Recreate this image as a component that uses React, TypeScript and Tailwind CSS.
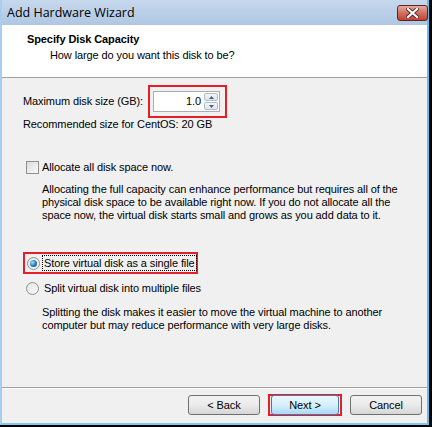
const ui = "font-['Liberation_Sans',Arial,sans-serif] text-[11px] leading-[13px] tracking-[-0.1px] text-black";

function WinButton({ label, active }: { label: string; active?: boolean }) {
  return (
    <button
      className={
        "h-[20px] rounded-[3px] border text-[11px] leading-none " +
        (active
          ? "w-[68px] border-[#3c7fb1] bg-gradient-to-b from-[#eaf6fd] via-[#d9f0fc] to-[#a7d9f5]"
          : "w-[72px] border-[#707070] bg-gradient-to-b from-[#f2f2f2] via-[#ebebeb] to-[#d6d6d6]")
      }
    >
      {label}
    </button>
  );
}

function Radio({ checked }: { checked?: boolean }) {
  return (
    <span className="flex h-[13px] w-[13px] shrink-0 items-center justify-center rounded-full border border-[#8e8f8f] bg-gradient-to-br from-[#e4e4e4] to-[#f9f9f9]">
      {checked && (
        <span className="h-[7px] w-[7px] rounded-full bg-[radial-gradient(circle_at_35%_35%,#9be0fb,#1f6fb2_60%,#0b3f77)]"></span>
      )}
    </span>
  );
}

export default function App() {
  return (
    <div className="h-[427px] w-[432px] bg-black">
      <div className={"flex h-[425px] w-[429px] flex-col border-x-2 border-b-2 border-l-[#a8cdee] border-r-[#59c3ef] border-b-[#7fc9ef] " + ui}>
        {/* Title bar */}
        <div className="relative flex h-[25px] items-center bg-gradient-to-b from-[#c6d8ed] to-[#aec7e2] pl-[5px]">
          <span className="font-['Open_Sans',sans-serif] text-[12.5px] tracking-normal text-black">Add Hardware Wizard</span>
          <div className="absolute right-[-1px] top-[5px] flex h-[16px] w-[31px] items-center justify-center rounded-[3px] border border-[#5b2323] bg-gradient-to-b from-[#e9a99b] via-[#d0705f] to-[#c2402f]">
            <svg width="13" height="10" viewBox="0 0 13 10">
              <path d="M2 1 L11 9 M11 1 L2 9" stroke="#5a2a2a" strokeWidth="4" strokeLinecap="square" />
              <path d="M2 1 L11 9 M11 1 L2 9" stroke="#ffffff" strokeWidth="2.2" strokeLinecap="square" />
            </svg>
          </div>
        </div>

        {/* Header */}
        <div className="h-[53px] border-b border-[#a0a0a0] bg-white pl-[25px] pt-[8px]">
          <div className="font-bold">Specify Disk Capacity</div>
          <div className="mt-[3px] pl-[23px]">How large do you want this disk to be?</div>
        </div>

        {/* Body */}
        <div className="flex flex-1 flex-col bg-[#f0f0f0] pl-[21px]">
          <div className="mt-[7px] flex items-center">
            <span className="w-[125px]">Maximum disk size (GB):</span>
            <div className="flex h-[33px] w-[79px] items-center border-2 border-[#e3202a] pl-[3px]">
              <div className="flex h-[21px] w-[67px] border border-[#abadb3] bg-white">
                <span className="flex-1 pr-[3px] pt-[3px] text-right">1.0</span>
                <div className="flex w-[15px] flex-col gap-[1px] py-[1px] pr-[1px]">
                  <span className="flex flex-1 items-center justify-center rounded-[2px] border border-[#b5bcc7] bg-gradient-to-b from-[#f3f6fa] to-[#dde4ed]">
                    <svg width="5" height="3" viewBox="0 0 5 3"><path d="M0 3 L2.5 0 L5 3 Z" fill="#4c607a" /></svg>
                  </span>
                  <span className="flex flex-1 items-center justify-center rounded-[2px] border border-[#b5bcc7] bg-gradient-to-b from-[#f3f6fa] to-[#dde4ed]">
                    <svg width="5" height="3" viewBox="0 0 5 3"><path d="M0 0 L2.5 3 L5 0 Z" fill="#4c607a" /></svg>
                  </span>
                </div>
              </div>
            </div>
          </div>
          <div className="mt-[0px]">Recommended size for CentOS: 20 GB</div>

          <div className="mt-[30px] flex items-center gap-[3px] pl-[3px]">
            <span className="h-[13px] w-[13px] border border-[#8f8f8f] bg-gradient-to-br from-[#dcdcdc] to-[#fbfbfb]"></span>
            <span>Allocate all disk space now.</span>
          </div>
          <div className="mt-[9px] whitespace-nowrap pl-[19px]">
            <div>Allocating the full capacity can enhance performance but requires all of the</div>
            <div>physical disk space to be available right now. If you do not allocate all the</div>
            <div>space now, the virtual disk starts small and grows as you add data to it.</div>
          </div>

          <div className="mt-[30px] flex h-[22px] w-[175px] items-center whitespace-nowrap border-2 border-[#e3202a] pl-[2px]">
            <Radio checked />
            <span className="ml-[2px] border border-dotted border-black px-[1px] leading-[14px]">Store virtual disk as a single file</span>
          </div>
          <div className="mt-[8px] flex items-center gap-[5px] pl-[3px]">
            <Radio />
            <span>Split virtual disk into multiple files</span>
          </div>
          <div className="mt-[11px] whitespace-nowrap pl-[19px]">
            <div>Splitting the disk makes it easier to move the virtual machine to another</div>
            <div>computer but may reduce performance with very large disks.</div>
          </div>
        </div>

        {/* Footer */}
        <div className="flex h-[36px] items-start justify-end gap-[8px] border-t border-[#a0a0a0] bg-[#f0f0f0] pr-[5px] pt-[7px] shadow-[inset_0_1px_0_#ffffff]">
          <WinButton label="< Back" />
          <div className="-mt-[1px] flex h-[22px] w-[74px] items-center justify-center border-2 border-[#e3202a]">
            <WinButton label="Next >" active />
          </div>
          <WinButton label="Cancel" />
        </div>
      </div>
    </div>
  );
}
